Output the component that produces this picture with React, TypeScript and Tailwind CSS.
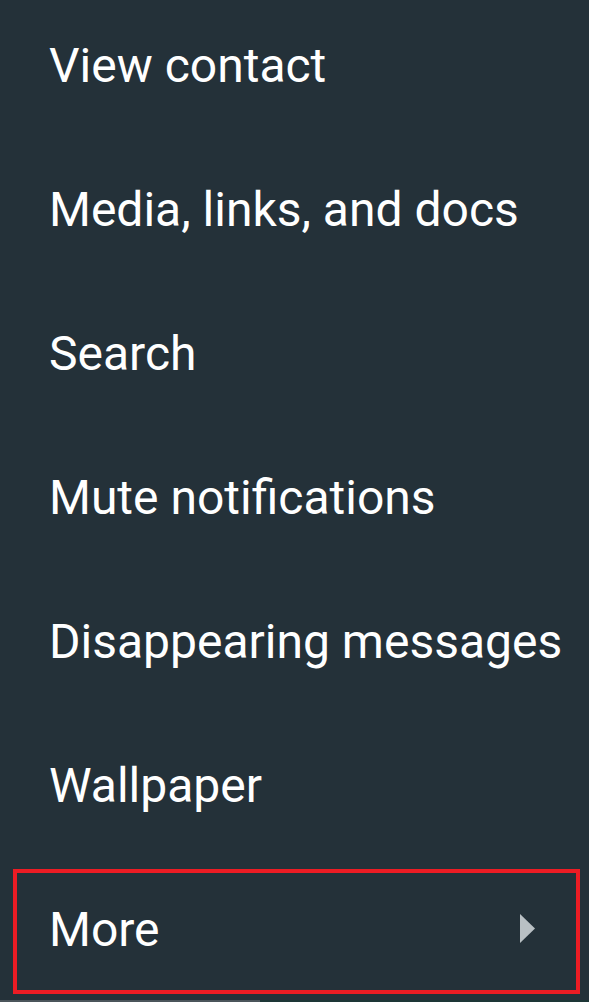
const items = [
  'View contact',
  'Media, links, and docs',
  'Search',
  'Mute notifications',
  'Disappearing messages',
  'Wallpaper',
];

const rowstyle = 'flex h-[144px] shrink-0 items-center pl-[49px] text-[48px] text-white';

function MoreRow() {
  return (
    <div className={`${rowstyle} relative pr-[54px] justify-between`}>
      <span>More</span>
      <svg width="15" height="29" viewBox="0 0 15 29" className="mt-[-3px]">
        <path d="M0 0 L15 14.5 L0 29 Z" fill="#b9c0c4" />
      </svg>
      <div className="absolute left-[13px] right-[9px] top-[11px] bottom-[8px] border-4 border-[#ec1c24]" />
    </div>
  );
}

export default function App() {
  return (
    <div
      className="relative flex h-[1002px] w-[589px] flex-col overflow-hidden bg-[#243139]"
      style={{ fontFamily: 'Roboto, "Noto Sans", sans-serif' }}
    >
      <div className="-mt-[6px] flex flex-col">
        {items.map((label) => (
          <div key={label} className={rowstyle}>
            {label}
          </div>
        ))}
        <MoreRow />
      </div>
      <div className="absolute bottom-0 left-0 right-0 flex h-[2px]">
        <div className="w-[260px] bg-[#4b555b]" />
        <div className="flex-1 bg-[#1d3636]" />
      </div>
    </div>
  );
}
